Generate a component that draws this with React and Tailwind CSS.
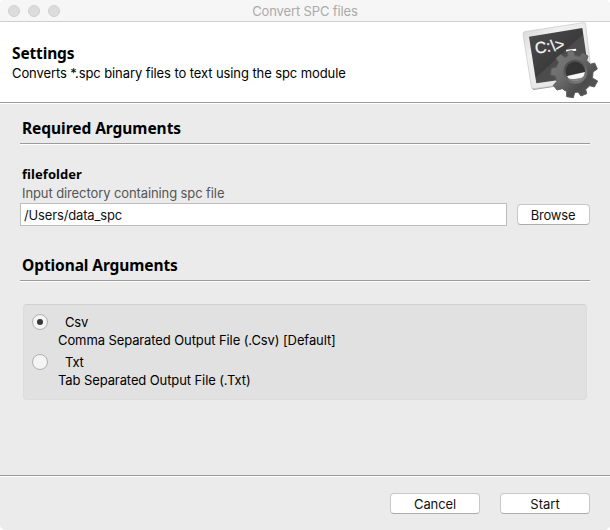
function Terminal() {
  return (
    <svg className="h-[77px] w-[78px] shrink-0" viewBox="36 36 234 231" aria-label="Command line">
      <defs>
        <linearGradient id="frame" x1="0" y1="0" x2="1" y2="1">
          <stop offset="0" stopColor="#d4d4d4" />
          <stop offset="0.3" stopColor="#f0f0f0" />
          <stop offset="1" stopColor="#e0e0e0" />
        </linearGradient>
        <linearGradient id="screen" x1="0" y1="0" x2="1" y2="1">
          <stop offset="0" stopColor="#4c4c4c" />
          <stop offset="0.5" stopColor="#3c3c3c" />
          <stop offset="0.51" stopColor="#4b4b4b" />
          <stop offset="1" stopColor="#555555" />
        </linearGradient>
        <linearGradient id="gear" x1="0" y1="0" x2="1" y2="1">
          <stop offset="0" stopColor="#7c7c7c" />
          <stop offset="0.4" stopColor="#6c6c6c" />
          <stop offset="0.7" stopColor="#4c4c4c" />
          <stop offset="1" stopColor="#5c5c5c" />
        </linearGradient>
        <linearGradient id="ring" x1="0" y1="0" x2="0.6" y2="1">
          <stop offset="0" stopColor="#444" />
          <stop offset="1" stopColor="#787878" />
        </linearGradient>
        <clipPath id="hole">
          <circle cx="196" cy="184" r="29" />
        </clipPath>
      </defs>
      <path d="M64 233 L70 240 L150 228 L240 216 L243 210 Z" fill="#9c9c9c" />
      <path d="M44 65 L220 38 Q226 37 227 43 L246 205 Q246 211 240 212 L72 236 Q65 237 64 230 L39 72 Q38 66 44 65 Z" fill="url(#frame)" stroke="#c6c6c6" strokeWidth="2" />
      <path d="M57 80 L217 54 L238 197 L79 220 Z" fill="url(#screen)" />
      <text transform="translate(77 131) rotate(-8)" fill="#f5f5f5" stroke="#f5f5f5" strokeWidth="0.8" fontFamily="Liberation Sans, sans-serif" fontSize="48" textLength="89" lengthAdjust="spacingAndGlyphs">C:\&gt;</text>
      <path d="M168 119 L198 116 L199 122 L169 125 Z" fill="#fff" />
      <path
        d="M172 125 Q181 121 190 123 L195 137 Q202 137 209 140 L217 129 L234 138 L230 151 Q237 157 240 163 L254 159 L262 177 L249 186 Q249 196 247 204 L263 213 L253 231 L239 227 Q233 234 227 238 L230 251 L213 258 L204 246 L194 248 L190 263 L170 260 L170 244 Q162 241 157 236 L141 240 L130 226 L141 214 Q137 206 136 199 L122 194 L124 175 L139 172 Q142 164 146 158 L138 145 L152 133 L165 142 L174 138 Z"
        fill="url(#gear)"
        stroke="#5e5e5e"
        strokeWidth="3"
        strokeLinejoin="round"
      />
      <circle cx="196" cy="185" r="36" fill="url(#ring)" />
      <g clipPath="url(#hole)">
        <rect x="160" y="150" width="72" height="72" fill="#333" />
        <path d="M160 201 L232 184 V225 H160 Z" fill="#f7f7f7" />
      </g>
      <path d="M222 200 Q211 213 194 213 Q181 213 173 205 Q184 208 198 206 Q212 205 222 200 Z" fill="#828282" />
    </svg>
  );
}

function Rule() {
  return <div className="h-[2px] border-b border-white bg-[#9b9b9b]" />;
}

function Button({ children, className }) {
  return (
    <button className={`h-[21px] rounded-[4px] border border-[#c8c8c8] border-b-[#acacac] bg-white text-center leading-[18px] text-[#111] ${className}`}>
      {children}
    </button>
  );
}

function Radio({ label, checked, help }) {
  return (
    <div className="h-10">
      <label className="flex h-[18px] items-center">
        <span className="flex size-4 items-center justify-center rounded-full border border-[#b0b0b0] bg-[#f4f4f4]">
          {checked && <span className="size-[6px] rounded-full bg-[#383838]" />}
        </span>
        <span className="ml-[17px] leading-[18px] tracking-[-0.2px]">{label}</span>
      </label>
      <p className="ml-[26px] leading-[18px] tracking-[-0.1px]">{help}</p>
    </div>
  );
}

export default function App() {
  return (
    <div className="h-[530px] w-[610px] overflow-hidden bg-white">
      <main className="flex h-full flex-col overflow-hidden rounded-b-[5px] rounded-t-[5px] bg-[#ebebeb] font-['Inter',sans-serif] text-[13px] whitespace-nowrap text-black">
        <header className="grid h-[22px] shrink-0 grid-cols-[100px_1fr_100px] items-center border-b border-[#d0d0d0] bg-[#f6f6f6]">
          <div className="flex gap-2 pl-2">
            <i className="size-3 rounded-full border border-[#cfcfcf] bg-[#dcdcdc]" />
            <i className="size-3 rounded-full border border-[#cfcfcf] bg-[#dcdcdc]" />
            <i className="size-3 rounded-full border border-[#cfcfcf] bg-[#dcdcdc]" />
          </div>
          <h1 className="text-center leading-[20px] tracking-[-0.13px] text-[#aaa]">Convert SPC files</h1>
        </header>
        <section className="flex h-20 shrink-0 justify-between bg-white pr-[10px] pl-3">
          <div className="pt-[21px]">
            <h2 className="font-['Noto_Sans',sans-serif] text-[15.5px] leading-[21px] font-bold tracking-[-0.15px]">Settings</h2>
            <p className="leading-[18px] tracking-[-0.09px]">Converts *.spc binary files to text using the spc module</p>
          </div>
          <Terminal />
        </section>
        <Rule />
        <section className="px-5 pt-[14px]">
          <h2 className="h-[25px] pl-[2px] font-['Noto_Sans',sans-serif] text-[15.5px] leading-[21px] font-bold tracking-[-0.05px]">Required Arguments</h2>
          <Rule />
          <h3 className="mt-[19px] pl-[2px] font-['Noto_Sans',sans-serif] leading-[20px] font-bold tracking-[0.06px]">filefolder</h3>
          <p className="mb-px pl-[2px] leading-[18px] tracking-[-0.1px] text-[#555]">Input directory containing spc file</p>
          <div className="flex items-center gap-[10px]">
            <div className="h-[23px] w-[487px] border border-[#bdbdbd] bg-white pl-[3px] leading-[23px] tracking-[-0.15px] text-[#111]">/Users/data_spc</div>
            <Button className="w-[73px] pr-px tracking-[-0.2px]">Browse</Button>
          </div>
          <h2 className="mt-[29px] h-[25px] pl-[2px] font-['Noto_Sans',sans-serif] text-[15.5px] leading-[21px] font-bold tracking-[-0.09px]">Optional Arguments</h2>
          <Rule />
          <div className="mt-[22px] mr-[3px] ml-[3px] h-24 rounded-[4px] border border-[#dcdcdc] border-t-[#d0d0d0] bg-[#e1e1e1] pt-2 pl-2">
            <Radio label="Csv" help="Comma Separated Output File (.Csv) [Default]" checked />
            <Radio label="Txt" help="Tab Separated Output File (.Txt)" />
          </div>
        </section>
        <footer className="mt-auto h-[55px] shrink-0">
          <Rule />
          <div className="flex justify-end gap-5 pt-4 pr-5">
            <Button className="w-[90px] tracking-[-0.1px]">Cancel</Button>
            <Button className="w-[90px]">Start</Button>
          </div>
        </footer>
      </main>
    </div>
  );
}
